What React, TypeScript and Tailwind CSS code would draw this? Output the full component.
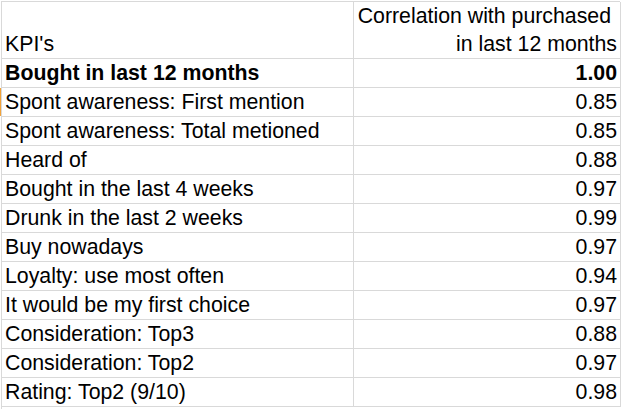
const rows: { label: string; value: string; bold?: boolean }[] = [
  { label: "Bought in last 12 months", value: "1.00", bold: true },
  { label: "Spont awareness: First mention", value: "0.85" },
  { label: "Spont awareness: Total metioned", value: "0.85" },
  { label: "Heard of", value: "0.88" },
  { label: "Bought in the last 4 weeks", value: "0.97" },
  { label: "Drunk in the last 2 weeks", value: "0.99" },
  { label: "Buy nowadays", value: "0.97" },
  { label: "Loyalty: use most often", value: "0.94" },
  { label: "It would be my first choice", value: "0.97" },
  { label: "Consideration: Top3", value: "0.88" },
  { label: "Consideration: Top2", value: "0.97" },
  { label: "Rating: Top2 (9/10)", value: "0.98" },
];

export default function App() {
  return (
    <div className="w-[621px] h-[409px] overflow-hidden bg-white text-black font-['Liberation_Sans',Arial,sans-serif] text-[21.3px] leading-[28px] flex">
      {/* row header edge, selected row is marked */}
      <div className="w-[1px] shrink-0">
        <div className="h-[88px]" />
        <div className="h-[28px] bg-[#f2a33a]" />
      </div>
      <div className="mt-[1px] w-[619px] border-t border-l border-[#d9d9d9] grid grid-cols-[352px_267px] content-start">
        <div className="h-[57px] border-r border-b border-[#d9d9d9] flex items-end pl-[3px]">
          KPI's
        </div>
        <div className="h-[57px] border-r border-b border-[#d9d9d9] flex flex-col justify-end items-end pr-[3px] whitespace-pre">
          <span className="pr-[6px]">Correlation with purchased</span>
          <span>in last 12 months</span>
        </div>
        {rows.map((r) => (
          <div key={r.label} className="contents">
            <div
              className={`h-[29px] border-r border-b border-[#d9d9d9] pl-[3px] whitespace-nowrap ${r.bold ? "font-bold" : ""}`}
            >
              {r.label}
            </div>
            <div
              className={`h-[29px] border-r border-b border-[#d9d9d9] pr-[3px] text-right ${r.bold ? "font-bold" : ""}`}
            >
              {r.value}
            </div>
          </div>
        ))}
      </div>
    </div>
  );
}
